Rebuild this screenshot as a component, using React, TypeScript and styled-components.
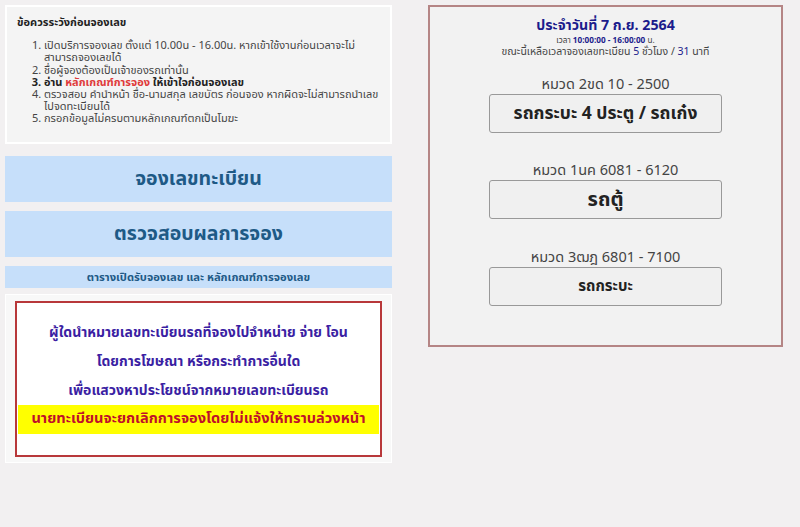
import React from 'react'
import styled, { createGlobalStyle } from 'styled-components'

const GlobalStyle = createGlobalStyle`
  body {
    margin: 0;
    background: #f2f0f1;
    font-family: Tahoma, "Noto Sans Thai", "Liberation Sans", "DejaVu Sans", sans-serif;
    color: #333;
  }
`

const Page = styled.div`
  display: flex;
  align-items: flex-start;
  gap: 36px;
  padding: 5px;
`

const LeftColumn = styled.div`
  width: 387px;
  display: flex;
  flex-direction: column;
`

const NotesBox = styled.div`
  box-sizing: border-box;
  height: 139px;
  background: #f4f4f4;
  border: 2px solid #fff;
  padding: 10px 10px;
  font-size: 11px;
  line-height: 12.2px;
`

const NotesTitle = styled.div`
  font-weight: bold;
  font-size: 11px;
  color: #222;
  margin-bottom: 11px;
`

const NotesList = styled.ol`
  margin: 0;
  padding-left: 27px;
  color: #444;
`

const NoteItem = styled.li<{ $bold?: boolean }>`
  font-weight: ${(p) => (p.$bold ? 'bold' : 'normal')};
  color: ${(p) => (p.$bold ? '#222' : '#444')};
`

const Hilite = styled.span`
  color: #e03a3a;
`

const BlueButton = styled.a<{ $small?: boolean }>`
  display: flex;
  align-items: center;
  justify-content: center;
  height: ${(p) => (p.$small ? '22px' : '46px')};
  margin-top: 9px;
  background: #c6dffa;
  color: #1e5a86;
  font-weight: bold;
  font-size: ${(p) => (p.$small ? '11.2px' : '19.5px')};
  text-decoration: none;
  cursor: pointer;

  &:first-of-type {
    margin-top: 12px;
  }
`

const NoticeFrame = styled.div`
  margin-top: 6px;
  background: #f8f8f8;
  border: 1px solid #fff;
  padding: 6px 9px 5px;
`

const NoticeBox = styled.div`
  box-sizing: border-box;
  height: 156px;
  background: #fff;
  border: 2px solid #b8383a;
  padding: 15px 0 0;
  text-align: center;
`

const NoticeLine = styled.div`
  color: #3b1fa3;
  font-weight: bold;
  font-size: 14px;
  line-height: 29px;
  white-space: nowrap;
`

const WarnLine = styled.div`
  background: #ffff00;
  color: #c0102a;
  font-weight: bold;
  font-size: 14.6px;
  line-height: 29px;
  margin: 0 1px;
  white-space: nowrap;
`

const SidePanel = styled.div`
  box-sizing: border-box;
  width: 355px;
  height: 342px;
  border: 2px solid #b58585;
  background: #f2f2f2;
  padding-top: 9px;
  display: flex;
  flex-direction: column;
  align-items: center;
`

const DayTitle = styled.div`
  color: #1c1c8c;
  font-weight: bold;
  font-size: 14.2px;
  line-height: 20px;
`

const SmallLine = styled.div<{ $size: number }>`
  font-size: ${(p) => p.$size}px;
  line-height: 10.5px;
  color: #444;
`

const Em = styled.b`
  color: #1c1c8c;
`

const Num = styled.span`
  color: #1c1c8c;
`

const Group = styled.div<{ $gap: number }>`
  margin-top: ${(p) => p.$gap}px;
  display: flex;
  flex-direction: column;
  align-items: center;
`

const GroupLabel = styled.div`
  font-size: 14.5px;
  line-height: 15px;
  color: #444;
  margin-bottom: 1px;
`

const PlateButton = styled.button<{ $size: number }>`
  width: 233px;
  height: 39px;
  background: #f0f0f0;
  border: 1px solid #999;
  border-radius: 3px;
  font-family: inherit;
  font-weight: bold;
  font-size: ${(p) => p.$size}px;
  color: #222;
  cursor: pointer;
`

const groups = [
  { label: 'หมวด 2ขด 10 - 2500', name: 'รถกระบะ 4 ประตู / รถเก๋ง', size: 17.5, gap: 21 },
  { label: 'หมวด 1นค 6081 - 6120', name: 'รถตู้', size: 20, gap: 31 },
  { label: 'หมวด 3ฒฎ 6801 - 7100', name: 'รถกระบะ', size: 15, gap: 32 },
]

export default function App() {
  return (
    <>
      <GlobalStyle />
      <Page>
        <LeftColumn>
          <NotesBox>
            <NotesTitle>ข้อควรระวังก่อนจองเลข</NotesTitle>
            <NotesList>
              <NoteItem>
                เปิดบริการจองเลข ตั้งแต่ 10.00น - 16.00น. หากเข้าใช้งานก่อนเวลาจะไม่สามารถจองเลขได้
              </NoteItem>
              <NoteItem>ชื่อผู้จองต้องเป็นเจ้าของรถเท่านั้น</NoteItem>
              <NoteItem $bold>
                อ่าน <Hilite>หลักเกณฑ์การจอง</Hilite> ให้เข้าใจก่อนจองเลข
              </NoteItem>
              <NoteItem>
                ตรวจสอบ คำนำหน้า ชื่อ-นามสกุล เลขบัตร ก่อนจอง หากผิดจะไม่สามารถนำเลขไปจดทะเบียนได้
              </NoteItem>
              <NoteItem>กรอกข้อมูลไม่ครบตามหลักเกณฑ์ตกเป็นโมฆะ</NoteItem>
            </NotesList>
          </NotesBox>

          <BlueButton>จองเลขทะเบียน</BlueButton>
          <BlueButton>ตรวจสอบผลการจอง</BlueButton>
          <BlueButton $small>ตารางเปิดรับจองเลข และ หลักเกณฑ์การจองเลข</BlueButton>

          <NoticeFrame>
            <NoticeBox>
              <NoticeLine>ผู้ใดนำหมายเลขทะเบียนรถที่จองไปจำหน่าย จ่าย โอน</NoticeLine>
              <NoticeLine>โดยการโฆษณา หรือกระทำการอื่นใด</NoticeLine>
              <NoticeLine>เพื่อแสวงหาประโยชน์จากหมายเลขทะเบียนรถ</NoticeLine>
              <WarnLine>นายทะเบียนจะยกเลิกการจองโดยไม่แจ้งให้ทราบล่วงหน้า</WarnLine>
            </NoticeBox>
          </NoticeFrame>
        </LeftColumn>

        <SidePanel>
          <DayTitle>ประจำวันที่ 7 ก.ย. 2564</DayTitle>
          <SmallLine $size={8.2}>
            เวลา <Em>10:00:00 - 16:00:00</Em> น.
          </SmallLine>
          <SmallLine $size={10.5}>
            ขณะนี้เหลือเวลาจองเลขทะเบียน <Num>5</Num> ชั่วโมง / <Num>31</Num> นาที
          </SmallLine>
          {groups.map((g) => (
            <Group key={g.label} $gap={g.gap}>
              <GroupLabel>{g.label}</GroupLabel>
              <PlateButton $size={g.size}>{g.name}</PlateButton>
            </Group>
          ))}
        </SidePanel>
      </Page>
    </>
  )
}
